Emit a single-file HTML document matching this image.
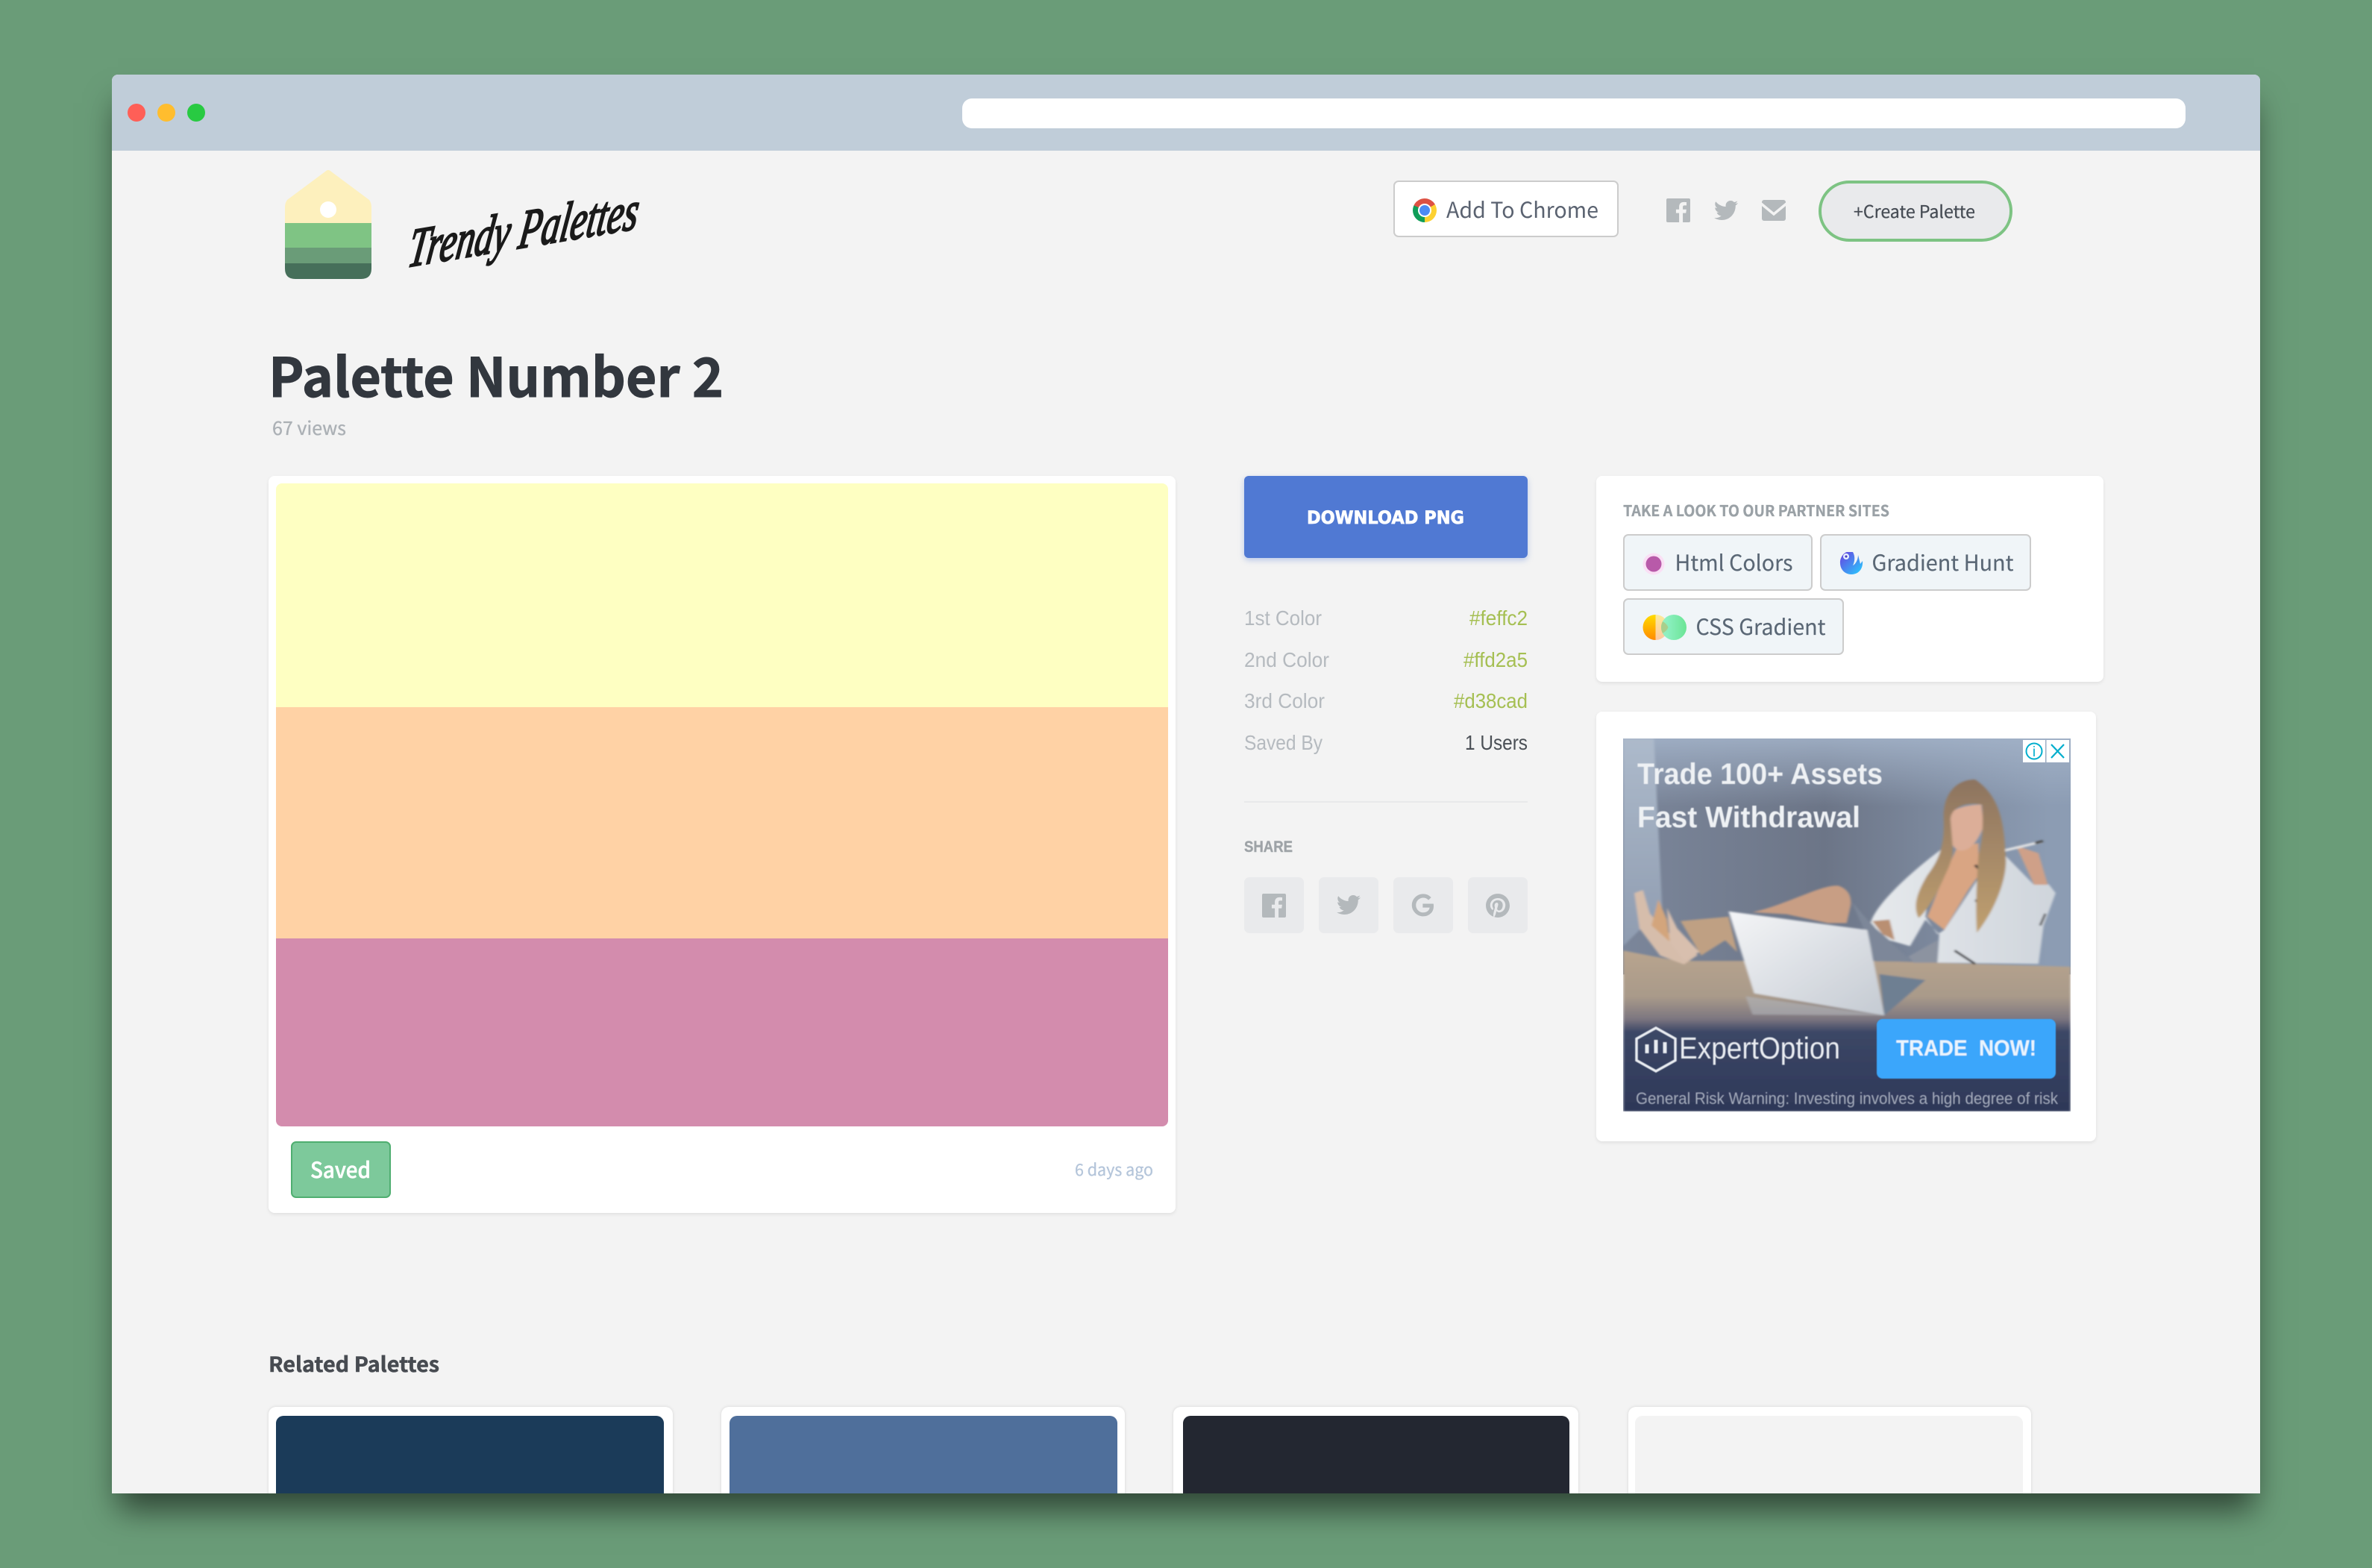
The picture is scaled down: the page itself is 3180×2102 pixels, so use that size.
<!DOCTYPE html>
<html lang="en">
<head>
<meta charset="utf-8">
<title>Palette Number 2 - Trendy Palettes</title>
<style>
*{box-sizing:border-box}
html,body{margin:0;padding:0;width:3180px;height:2102px;overflow:hidden;background:#6a9c78}
.a{position:absolute}
#win{left:150px;top:100px;width:2880px;height:1902px;background:#f3f3f3;border-radius:8px 8px 0 0;overflow:hidden}
#shadow{left:150px;top:100px;width:2880px;height:1902px;box-shadow:0 30px 40px -8px rgba(0,0,0,.56);border-radius:8px 8px 0 0}
#in{left:-150px;top:-100px;width:3180px;height:2102px}
.card{background:#fff;border-radius:8px;box-shadow:0 2px 5px rgba(0,0,0,.08)}
.btn{background:#f0f5f8;border:2px solid #ccc;border-radius:7px}
.sh{background:#e9eaec;border-radius:7px;width:80px;height:75px;top:1176px}
.rel{top:1886px;height:200px;background:#fff;border-radius:10px;box-shadow:0 0 4px rgba(0,0,0,.13)}
.inner{top:1898px;height:200px;border-radius:10px}
svg text{white-space:pre}
.s{font-family:"Noto Sans CJK JP","Liberation Sans",sans-serif}
.m{font-family:"Liberation Sans",sans-serif}
</style>
</head>
<body>
<div class="a" id="shadow"></div>
<div class="a" id="win"><div class="a" id="in">
  <!-- title bar -->
  <div class="a" style="left:150px;top:100px;width:2880px;height:102px;background:#c0cdd9"></div>
  <div class="a" style="left:171px;top:139px;width:24px;height:24px;border-radius:50%;background:#ff5f57"></div>
  <div class="a" style="left:211px;top:139px;width:24px;height:24px;border-radius:50%;background:#ffbd2e"></div>
  <div class="a" style="left:251px;top:139px;width:24px;height:24px;border-radius:50%;background:#28ca42"></div>
  <div class="a" style="left:1290px;top:132px;width:1640px;height:40px;border-radius:13px;background:#fff"></div>

  <!-- nav buttons -->
  <div class="a" style="left:1868px;top:242px;width:302px;height:76px;background:#fff;border:2px solid #ccc;border-radius:7px"></div>
  <div class="a" style="left:1894px;top:266px;width:32px;height:32px;border-radius:50%;background:conic-gradient(from -65deg,#dd5144 0 125deg,#fdd131 125deg 245deg,#0f9d58 245deg 360deg)"></div>
  <div class="a" style="left:1903px;top:275px;width:14px;height:14px;border-radius:50%;background:#4c8bf5;box-shadow:0 0 0 2px #fff"></div>
  <div class="a" style="left:2438px;top:242px;width:260px;height:82px;background:#e9eaec;border:4px solid #7dc383;border-radius:41px"></div>

  <!-- main card -->
  <div class="a card" style="left:360px;top:638px;width:1216px;height:988px"></div>
  <div class="a" style="left:370px;top:648px;width:1196px;height:862px;border-radius:8px;overflow:hidden">
    <div style="height:300px;background:#feffc2"></div>
    <div style="height:310px;background:#ffd2a5"></div>
    <div style="height:252px;background:#d38cad"></div>
  </div>
  <div class="a" style="left:390px;top:1530px;width:134px;height:76px;background:#7dc99b;border:2px solid #4fae70;border-radius:7px"></div>

  <!-- download -->
  <div class="a" style="left:1668px;top:638px;width:380px;height:110px;background:#5079d3;border-radius:6px;box-shadow:0 3px 8px rgba(80,121,211,.35)"></div>
  <div class="a" style="left:1668px;top:1074px;width:380px;height:2px;background:#e8e9ea"></div>
  <div class="a sh" style="left:1668px"></div>
  <div class="a sh" style="left:1768px"></div>
  <div class="a sh" style="left:1868px"></div>
  <div class="a sh" style="left:1968px"></div>

  <!-- partner card -->
  <div class="a card" style="left:2140px;top:638px;width:680px;height:276px"></div>
  <div class="a btn" style="left:2176px;top:716px;width:254px;height:76px"></div>
  <div class="a btn" style="left:2440px;top:716px;width:283px;height:76px"></div>
  <div class="a btn" style="left:2176px;top:802px;width:296px;height:76px"></div>

  <!-- ad card -->
  <div class="a card" style="left:2140px;top:954px;width:670px;height:576px"></div>

  <!-- related -->
  <div class="a rel" style="left:360px;width:542px"></div>
  <div class="a inner" style="left:370px;width:520px;background:#1b3b59"></div>
  <div class="a rel" style="left:967px;width:541px"></div>
  <div class="a inner" style="left:978px;width:520px;background:#4f6f9b"></div>
  <div class="a rel" style="left:1573px;width:543px"></div>
  <div class="a inner" style="left:1586px;width:518px;background:#232731"></div>
  <div class="a rel" style="left:2183px;width:540px"></div>
  <div class="a inner" style="left:2192px;width:520px;background:#f3f3f3"></div>

  <!-- overlay svg: logo, text, icons -->
  <svg class="a" style="left:0;top:0" width="3180" height="2102" viewBox="0 0 3180 2102" xmlns="http://www.w3.org/2000/svg">
    <defs>
      <clipPath id="tag"><path d="M436 230Q440 226 444 230L495 268Q498 272 498 278L498 360Q498 374 484 374L396 374Q382 374 382 360L382 278Q382 272 385 268Z"/></clipPath>
      <linearGradient id="gh" x1="0" y1="0" x2="1" y2="1"><stop offset="0" stop-color="#6a3fe0"/><stop offset="1" stop-color="#25d0ff"/></linearGradient>
      <linearGradient id="or" x1="0" y1="0" x2="0" y2="1"><stop offset="0" stop-color="#ffdc00"/><stop offset="1" stop-color="#ff8a00"/></linearGradient>
      <linearGradient id="orp" x1="0" y1="0" x2="0" y2="1"><stop offset="0" stop-color="#fdeb9a"/><stop offset="1" stop-color="#fdc8a0"/></linearGradient>
      <linearGradient id="gr" x1="0" y1="0" x2="1" y2="0"><stop offset="0" stop-color="#8ff3cc"/><stop offset="1" stop-color="#5fe38c"/></linearGradient>
      <clipPath id="lh"><rect x="2195" y="820" width="24.5" height="42"/></clipPath>
      <clipPath id="rh"><rect x="2219.5" y="820" width="24.5" height="42"/></clipPath>
    </defs>

    <!-- logo -->
    <g clip-path="url(#tag)">
      <rect x="380" y="226" width="120" height="74" fill="#fdf0bd"/>
      <rect x="380" y="299" width="120" height="34" fill="#7fc484"/>
      <rect x="380" y="332" width="120" height="22" fill="#6a9c78"/>
      <rect x="380" y="353" width="120" height="22" fill="#466f5a"/>
    </g>
    <circle cx="440" cy="281" r="11" fill="#fff"/>
    <text transform="translate(545 358) rotate(-9.5) skewX(-18)" x="0" y="0" font-family="'Liberation Serif',serif" font-style="italic" font-size="72" fill="#1a1a1a" stroke="#1a1a1a" stroke-width="2.4" textLength="312" lengthAdjust="spacingAndGlyphs">Trendy Palettes</text>

    <!-- header -->
    <text class="s" x="1939" y="292" font-size="29" fill="#5a6270" textLength="204" lengthAdjust="spacingAndGlyphs">Add To Chrome</text>
    <g fill="#b4b9bc">
      <path transform="translate(2234 266) scale(1.3333)" d="M22.676 0H1.324C.593 0 0 .593 0 1.324v21.352C0 23.408.593 24 1.324 24h11.494v-9.294H9.689v-3.621h3.129V8.41c0-3.099 1.894-4.785 4.659-4.785 1.325 0 2.464.097 2.796.141v3.24h-1.921c-1.5 0-1.792.721-1.792 1.771v2.311h3.584l-.465 3.63H16.56V24h6.115c.733 0 1.325-.592 1.325-1.324V1.324C24 .593 23.408 0 22.676 0"/>
      <path transform="translate(2298 266) scale(1.3333)" d="M23.954 4.569c-.885.389-1.83.654-2.825.775 1.014-.611 1.794-1.574 2.163-2.723-.951.555-2.005.959-3.127 1.184-.896-.959-2.173-1.559-3.591-1.559-2.717 0-4.92 2.203-4.92 4.917 0 .39.045.765.127 1.124C7.691 8.094 4.066 6.13 1.64 3.161c-.427.722-.666 1.561-.666 2.475 0 1.71.87 3.213 2.188 4.096-.807-.026-1.566-.248-2.228-.616v.061c0 2.385 1.693 4.374 3.946 4.827-.413.111-.849.171-1.296.171-.314 0-.615-.03-.916-.086.631 1.953 2.445 3.377 4.604 3.417-1.68 1.319-3.809 2.105-6.102 2.105-.39 0-.779-.023-1.17-.067 2.189 1.394 4.768 2.209 7.557 2.209 9.054 0 13.999-7.496 13.999-13.986 0-.209 0-.42-.015-.63.961-.689 1.8-1.56 2.46-2.548l-.047-.02z"/>
      <rect x="2362" y="268" width="32" height="28" rx="3"/>
    </g>
    <path d="M2361 273L2378 287L2395 273" fill="none" stroke="#f3f3f3" stroke-width="3.5"/>
    <text class="s" x="2485" y="292" font-size="23" fill="#464c54" stroke="#464c54" stroke-width=".25" textLength="163" lengthAdjust="spacingAndGlyphs">+Create Palette</text>

    <!-- heading -->
    <text class="s" x="360" y="532" font-size="72" font-weight="700" fill="#32373e" stroke="#32373e" stroke-width="1" textLength="610" lengthAdjust="spacingAndGlyphs">Palette Number 2</text>
    <text class="s" x="365" y="583" font-size="25" fill="#abb0b5" stroke="#abb0b5" stroke-width=".35" textLength="99" lengthAdjust="spacingAndGlyphs">67 views</text>

    <!-- main card footer -->
    <text class="s" x="416" y="1579" font-size="29" font-weight="500" fill="#fff" stroke="#fff" stroke-width=".5" textLength="81" lengthAdjust="spacingAndGlyphs">Saved</text>
    <text class="s" x="1441" y="1576" font-size="22" fill="#b4c5da" stroke="#b4c5da" stroke-width=".3" textLength="105" lengthAdjust="spacingAndGlyphs">6 days ago</text>

    <!-- download -->
    <text x="1752" y="702" font-family="'DejaVu Sans',sans-serif" font-weight="700" font-size="24" fill="#fff" stroke="#fff" stroke-width=".7" textLength="211" lengthAdjust="spacingAndGlyphs">DOWNLOAD PNG</text>

    <g class="m" font-size="28" fill="#b5babf">
      <text x="1668" y="838" textLength="104" lengthAdjust="spacingAndGlyphs">1st Color</text>
      <text x="1668" y="894" textLength="114" lengthAdjust="spacingAndGlyphs">2nd Color</text>
      <text x="1668" y="949" textLength="108" lengthAdjust="spacingAndGlyphs">3rd Color</text>
      <text x="1668" y="1005" textLength="105" lengthAdjust="spacingAndGlyphs">Saved By</text>
    </g>
    <g class="m" font-size="28" fill="#a5bf52">
      <text x="1970" y="838" textLength="78" lengthAdjust="spacingAndGlyphs">#feffc2</text>
      <text x="1962" y="894" textLength="86" lengthAdjust="spacingAndGlyphs">#ffd2a5</text>
      <text x="1949" y="949" textLength="99" lengthAdjust="spacingAndGlyphs">#d38cad</text>
    </g>
    <text class="m" x="1964" y="1005" font-size="28" fill="#4a4f55" textLength="84" lengthAdjust="spacingAndGlyphs">1 Users</text>
    <text class="m" x="1668" y="1142" font-size="21" font-weight="700" fill="#9ea3a7" stroke="#9ea3a7" stroke-width=".4" textLength="65" lengthAdjust="spacingAndGlyphs">SHARE</text>

    <g fill="#b4b9bc">
      <path transform="translate(1692 1198) scale(1.3333)" d="M22.676 0H1.324C.593 0 0 .593 0 1.324v21.352C0 23.408.593 24 1.324 24h11.494v-9.294H9.689v-3.621h3.129V8.41c0-3.099 1.894-4.785 4.659-4.785 1.325 0 2.464.097 2.796.141v3.24h-1.921c-1.5 0-1.792.721-1.792 1.771v2.311h3.584l-.465 3.63H16.56V24h6.115c.733 0 1.325-.592 1.325-1.324V1.324C24 .593 23.408 0 22.676 0"/>
      <path transform="translate(1792 1197) scale(1.3333)" d="M23.954 4.569c-.885.389-1.83.654-2.825.775 1.014-.611 1.794-1.574 2.163-2.723-.951.555-2.005.959-3.127 1.184-.896-.959-2.173-1.559-3.591-1.559-2.717 0-4.92 2.203-4.92 4.917 0 .39.045.765.127 1.124C7.691 8.094 4.066 6.13 1.64 3.161c-.427.722-.666 1.561-.666 2.475 0 1.71.87 3.213 2.188 4.096-.807-.026-1.566-.248-2.228-.616v.061c0 2.385 1.693 4.374 3.946 4.827-.413.111-.849.171-1.296.171-.314 0-.615-.03-.916-.086.631 1.953 2.445 3.377 4.604 3.417-1.68 1.319-3.809 2.105-6.102 2.105-.39 0-.779-.023-1.17-.067 2.189 1.394 4.768 2.209 7.557 2.209 9.054 0 13.999-7.496 13.999-13.986 0-.209 0-.42-.015-.63.961-.689 1.8-1.56 2.46-2.548l-.047-.02z"/>
      <path transform="translate(1893 1199) scale(1.2)" stroke="#b4b9bc" stroke-width="1" d="M12.48 10.92v3.28h7.84c-.24 1.84-.853 3.187-1.787 4.133-1.147 1.147-2.933 2.4-6.053 2.4-4.827 0-8.6-3.893-8.6-8.72s3.773-8.72 8.6-8.72c2.6 0 4.507 1.027 5.907 2.347l2.307-2.307C18.747 1.44 16.133 0 12.48 0 5.867 0 .307 5.387.307 12s5.56 12 12.173 12c3.573 0 6.267-1.173 8.373-3.36 2.16-2.16 2.84-5.213 2.84-7.667 0-.76-.053-1.467-.173-2.053H12.48z"/>
      <path transform="translate(1992 1198) scale(1.3333)" d="M12.017 0C5.396 0 .029 5.367.029 11.987c0 5.079 3.158 9.417 7.618 11.162-.105-.949-.199-2.403.041-3.439.219-.937 1.406-5.957 1.406-5.957s-.359-.72-.359-1.781c0-1.663.967-2.911 2.168-2.911 1.024 0 1.518.769 1.518 1.688 0 1.029-.653 2.567-.992 3.992-.285 1.193.6 2.165 1.775 2.165 2.128 0 3.768-2.245 3.768-5.487 0-2.861-2.063-4.869-5.008-4.869-3.41 0-5.409 2.562-5.409 5.199 0 1.033.394 2.143.889 2.741.099.12.112.225.085.345-.09.375-.293 1.199-.334 1.363-.053.225-.172.271-.401.165-1.495-.69-2.433-2.878-2.433-4.646 0-3.776 2.748-7.252 7.92-7.252 4.158 0 7.392 2.967 7.392 6.923 0 4.135-2.607 7.462-6.233 7.462-1.214 0-2.354-.629-2.758-1.379l-.749 2.848c-.269 1.045-1.004 2.352-1.498 3.146 1.123.345 2.306.535 3.55.535 6.607 0 11.985-5.365 11.985-11.987C23.97 5.39 18.592.026 11.985.026L12.017 0z"/>
    </g>

    <!-- partner -->
    <text class="s" x="2176" y="692" font-size="20" font-weight="700" fill="#9aa1a6" stroke="#9aa1a6" stroke-width=".3" textLength="357" lengthAdjust="spacingAndGlyphs">TAKE A LOOK TO OUR PARTNER SITES</text>
    <circle cx="2217" cy="756" r="14.500" fill="#fadff5"/>
    <circle cx="2217" cy="756" r="10.500" fill="#b85aa9"/>
    <text class="s" x="2245.500" y="765" font-size="29" fill="#5a6775" stroke="#5a6775" stroke-width=".15" textLength="158" lengthAdjust="spacingAndGlyphs">Html Colors</text>
    <path d="M2476 740C2472 741 2468 746 2467 752C2466 764 2474 770 2482 770C2492 770 2498 762 2497 752L2494 756L2491 744C2491 750 2488 756 2484 758C2487 752 2487 745 2484 740Z" fill="url(#gh)"/>
    <circle cx="2475" cy="746" r="4" fill="#e9f4ff"/>
    <circle cx="2475" cy="746" r="1.600" fill="#4b3bc2"/>
    <text class="s" x="2509.500" y="765" font-size="29" fill="#5a6775" stroke="#5a6775" stroke-width=".15" textLength="190" lengthAdjust="spacingAndGlyphs">Gradient Hunt</text>

    <circle cx="2219.500" cy="841" r="17" fill="url(#or)" clip-path="url(#lh)"/>
    <circle cx="2219.500" cy="841" r="17" fill="url(#orp)" clip-path="url(#rh)"/>
    <circle cx="2244" cy="841" r="17" fill="url(#gr)" opacity=".92"/>
    <path d="M2229 833A17 17 0 0 1 2236.500 841A17 17 0 0 1 2229 849A17 17 0 0 1 2227 841A17 17 0 0 1 2229 833Z" fill="#a8cf8c"/>
    <text class="s" x="2273.500" y="851" font-size="29" fill="#5a6775" stroke="#5a6775" stroke-width=".15" textLength="174" lengthAdjust="spacingAndGlyphs">CSS Gradient</text>

    <!-- related heading -->
    <text class="s" x="360" y="1839" font-size="28" font-weight="700" fill="#474b51" stroke="#474b51" stroke-width=".5" textLength="229" lengthAdjust="spacingAndGlyphs">Related Palettes</text>
  </svg>

  <!-- ad -->
  <svg class="a" style="left:2176px;top:990px" width="600" height="500" viewBox="0 0 600 500" xmlns="http://www.w3.org/2000/svg">
    <defs>
      <linearGradient id="wall" x1="0" y1="0" x2="1" y2="0"><stop offset="0" stop-color="#7b869a"/><stop offset=".45" stop-color="#6c7587"/><stop offset=".95" stop-color="#8c9cb3"/></linearGradient>
      <linearGradient id="top" x1="0" y1="0" x2="0" y2="1"><stop offset="0" stop-color="#a4b4ca" stop-opacity=".85"/><stop offset="1" stop-color="#a4b4ca" stop-opacity="0"/></linearGradient>
      <linearGradient id="strip" x1="0" y1="0" x2="0" y2="1"><stop offset="0" stop-color="#adbacb"/><stop offset="1" stop-color="#8f9cb0"/></linearGradient>
      <linearGradient id="desk" gradientUnits="userSpaceOnUse" x1="0" y1="850" x2="0" y2="1391"><stop offset="0" stop-color="#b8a48e"/><stop offset=".28" stop-color="#a99a8a"/><stop offset=".42" stop-color="#7c7680"/><stop offset=".5" stop-color="#3c4766"/><stop offset="1" stop-color="#2e3858"/></linearGradient>
      <linearGradient id="lap" x1="0" y1="0" x2="1" y2="1"><stop offset="0" stop-color="#f4f5f7"/><stop offset="1" stop-color="#c4cad2"/></linearGradient>
      <linearGradient id="jack" x1="0" y1="0" x2="1" y2="0"><stop offset="0" stop-color="#e6e9ec"/><stop offset="1" stop-color="#cfd5dc"/></linearGradient>
      <linearGradient id="hr" x1="0" y1="0" x2="0" y2="1"><stop offset="0" stop-color="#8d7460"/><stop offset="1" stop-color="#c0a070"/></linearGradient>
      <filter id="bl" x="-5%" y="-5%" width="110%" height="110%"><feGaussianBlur stdDeviation="3.500"/></filter>
      <filter id="tb" x="-5%" y="-20%" width="110%" height="140%"><feGaussianBlur stdDeviation=".6"/></filter>
    </defs>
    <g transform="scale(.4591 .3954) translate(-122 -126)">
      <rect x="122" y="126" width="1307" height="800" fill="url(#wall)"/>
      <rect x="122" y="126" width="1307" height="230" fill="url(#top)"/>
      <g filter="url(#bl)">
        <path d="M122 126L212 126L236 700L122 830Z" fill="url(#strip)"/>
        <path d="M122 845L280 880L860 880L1429 900L1429 1391L122 1391Z" fill="url(#desk)"/>
        <!-- lower leg -->
        <path d="M290 745L430 730L455 850L420 810L350 862Z" fill="#bfa083"/>
        <!-- thigh -->
        <path d="M500 715C600 690 700 620 750 625C790 640 790 680 785 700L775 752L720 752L600 722Z" fill="#c89e84"/>
        <!-- shoes -->
        <path d="M155 650L180 640L200 720L260 790L340 860L300 892L230 862L170 770Z" fill="#d6bdab"/>
        <path d="M205 760L225 672L250 740L258 815Z" fill="#d3a57c"/>
        <path d="M250 700L280 770L345 850L300 880L260 820Z" fill="#d8bfae"/>
        <!-- skirt -->
        <path d="M790 680L850 760L965 882L860 882L830 785Z" fill="#7d8799"/>
        <path d="M955 865L1040 810L1040 886L970 886Z" fill="#8c93a0"/>
        <!-- jacket -->
        <path d="M845 750C860 690 950 590 1055 498L1020 620L1005 730L1040 790L1060 775L1165 590L1240 525L1320 620L1365 620L1385 650L1350 760L1335 890L1040 886L1045 790L1005 740L960 830L900 810L860 770Z" fill="url(#jack)"/>
        <!-- hand at waist -->
        <path d="M850 745L900 740L915 810L880 790Z" fill="#b98f72"/>
        <!-- chest / neck -->
        <path d="M1060 590L1095 500L1160 480L1160 590L1130 640L1060 775L1010 730Z" fill="#d9a583"/>
        <path d="M1150 555L1180 590" stroke="#2c2c30" stroke-width="8"/>
        <path d="M1090 845L1150 890" stroke="#2c2c30" stroke-width="7"/>
        <path d="M1150 676L1170 676" stroke="#3c3c42" stroke-width="9"/>
        <path d="M1355 720L1340 760" stroke="#2c2c30" stroke-width="6"/>
        <!-- hand arm -->
        <path d="M1270 490L1335 515L1362 622L1322 622Z" fill="#cfa088"/>
        <path d="M1220 510L1345 476" stroke="#e6e6e6" stroke-width="8"/>
        <path d="M1325 481L1348 474" stroke="#444" stroke-width="8"/>
        <!-- face -->
        <path d="M1072 385C1068 440 1075 500 1105 506C1140 510 1165 460 1175 420L1168 350C1130 350 1090 360 1072 385Z" fill="#dcae98"/>
        <!-- hair -->
        <path d="M1150 265C1090 265 1055 320 1058 400C1060 480 1050 530 1010 590C985 640 965 690 985 735C1010 710 1040 650 1062 590C1075 560 1085 530 1085 500L1078 400C1080 360 1120 340 1170 350C1175 420 1170 480 1160 520C1155 600 1150 700 1155 785C1200 720 1240 620 1240 540C1235 450 1235 330 1150 265Z" fill="url(#hr)"/>
        <!-- laptop -->
        <path d="M480 1000L885 1065L500 1062Z" fill="#b2b5ba" opacity=".6"/>
        <path d="M870 925L1005 945L885 1065Z" fill="#6e7f92"/>
        <path d="M430 712L835 775L885 1065L505 990Z" fill="url(#lap)"/>
      </g>
    </g>

    <g filter="url(#tb)">
      <text x="19" y="61" class="m" font-size="40" font-weight="700" fill="#eef1f4" textLength="329" lengthAdjust="spacingAndGlyphs">Trade 100+ Assets</text>
      <text x="19" y="119" class="m" font-size="40" font-weight="700" fill="#eef1f4" textLength="299" lengthAdjust="spacingAndGlyphs">Fast Withdrawal</text>

      <path d="M44 388L70 402.500L70 431.500L44 446L18 431.500L18 402.500Z" fill="none" stroke="#e9ecf1" stroke-width="3.500"/>
      <path d="M32 422V410M44 422V404M56 422V407" stroke="#e9ecf1" stroke-width="5"/>
      <text x="75" y="429" class="m" font-size="41" fill="#e9ecf1" textLength="216" lengthAdjust="spacingAndGlyphs">ExpertOption</text>

      <rect x="340" y="376" width="240" height="80" rx="8" fill="#3aa6fb"/>
      <text x="366" y="425" class="m" font-size="30" font-weight="700" fill="#eaf4fd" textLength="188" lengthAdjust="spacingAndGlyphs">TRADE  NOW!</text>

      <text x="17" y="490" class="m" font-size="22" fill="#a5acbc" textLength="566" lengthAdjust="spacingAndGlyphs">General Risk Warning: Investing involves a high degree of risk</text>
    </g>

    <rect x="536" y="2" width="30" height="30" fill="#fff"/>
    <rect x="567.500" y="2" width="30.500" height="30" fill="#fff"/>
    <circle cx="551" cy="17" r="10.500" fill="none" stroke="#00aecd" stroke-width="2"/>
    <text x="551" y="24" text-anchor="middle" class="m" font-size="19" fill="#00aecd">i</text>
    <path d="M574 8L591 26M591 8L574 26" stroke="#00aecd" stroke-width="2.200" fill="none"/>
  </svg>
</div></div>
</body>
</html>
